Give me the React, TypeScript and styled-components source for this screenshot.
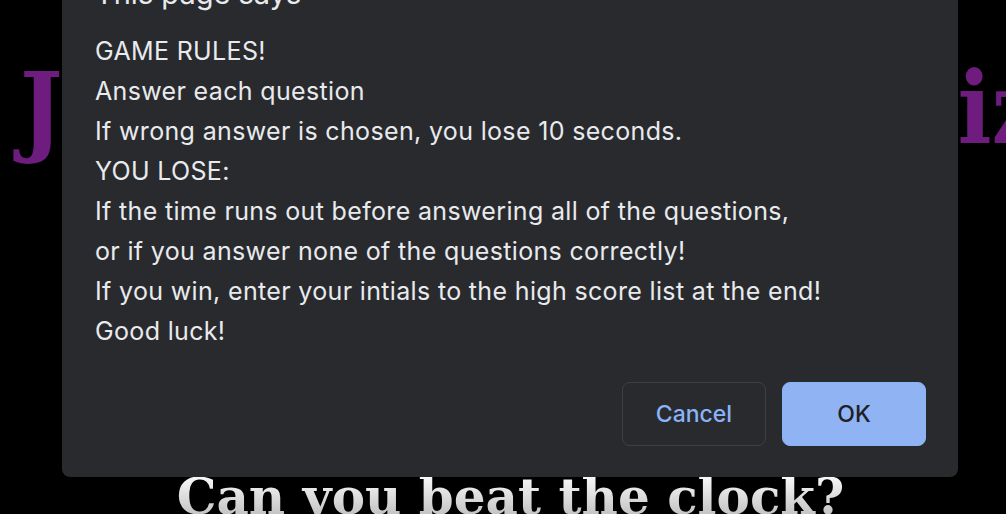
import styled, { createGlobalStyle } from "styled-components";

const GlobalStyle = createGlobalStyle`
    html, body {
        margin: 0;
        padding: 0;
        background: #000;
        height: 100%;
        overflow: hidden;
    }
`;

const Page = styled.main`
    display: flex;
    flex-direction: column;
    font-family: "DejaVu Serif", serif;
`;

const Title = styled.h1`
    margin: 58px 0 0;
    padding-left: 20px;
    font-family: "DejaVu Serif", serif;
    font-stretch: condensed;
    font-size: 100px;
    line-height: 100px;
    word-spacing: 245px;
    font-weight: 700;
    color: #6e1c7e;
    white-space: nowrap;
`;

const Tagline = styled.h2`
    align-self: center;
    margin: 314px 0 0 15px;
    font-size: 50px;
    line-height: 50px;
    font-weight: 700;
    white-space: nowrap;
    background: linear-gradient(#ffffff, #b9b9b9);
    -webkit-background-clip: text;
    background-clip: text;
    color: transparent;
`;

const Dialog = styled.div`
    position: fixed;
    top: -55px;
    left: 62px;
    width: 896px;
    box-sizing: border-box;
    padding: 32px 32px 31px 33px;
    background: #292a2d;
    border-radius: 8px;
    font-family: Inter, "Noto Sans", sans-serif;
    color: #e8eaed;
`;

const DialogTitle = styled.div`
    font-size: 29px;
    line-height: 34px;
`;

const Message = styled.div`
    margin-top: 20px;
    font-size: 25px;
    line-height: 40px;
    letter-spacing: 0.34px;
    white-space: pre-line;
`;

const Actions = styled.div`
    display: flex;
    justify-content: flex-end;
    gap: 16px;
    margin-top: 31px;
`;

const Button = styled.button<{ $primary?: boolean }>`
    width: 144px;
    height: 64px;
    box-sizing: border-box;
    border-radius: 8px;
    font-family: Inter, "Noto Sans", sans-serif;
    font-size: 23px;
    font-weight: 500;
    cursor: pointer;
    border: 1px solid ${(p) => (p.$primary ? "#8ab4f8" : "#3f4044")};
    background: ${(p) => (p.$primary ? "#8fb3f3" : "transparent")};
    color: ${(p) => (p.$primary ? "#202124" : "#8ab4f8")};
`;

const rules = [
    "GAME RULES!",
    "Answer each question",
    "If wrong answer is chosen, you lose 10 seconds.",
    "YOU LOSE:",
    "If the time runs out before answering all of the questions,",
    "or if you answer none of the questions correctly!",
    "If you win, enter your intials to the high score list at the end!",
    "Good luck!",
];

export default function App() {
    return (
        <>
            <GlobalStyle />
            <Page>
                <Title>JavaScript Quiz</Title>
                <Tagline>Can you beat the clock?</Tagline>
            </Page>
            <Dialog>
                <DialogTitle>This page says</DialogTitle>
                <Message>{rules.join("\n")}</Message>
                <Actions>
                    <Button>Cancel</Button>
                    <Button $primary>OK</Button>
                </Actions>
            </Dialog>
        </>
    );
}
